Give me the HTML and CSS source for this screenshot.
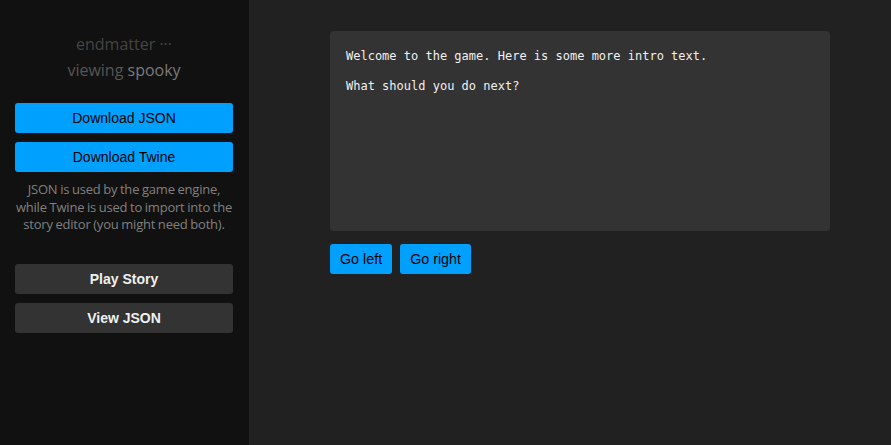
FILE: index.html
```html
<!DOCTYPE html>
<html>
<head>
<meta charset="utf-8">
<link rel="stylesheet" href="styles.css">
</head>
<body>
<div class="app">
  <aside class="sidebar">
    <div class="title">endmatter ···</div>
    <div class="viewing">viewing <span class="story">spooky</span></div>
    <div class="btns">
      <button class="btn primary">Download JSON</button>
      <button class="btn primary">Download Twine</button>
    </div>
    <p class="note">JSON is used by the game engine,<br>while Twine is used to import into the<br>story editor (you might need both).</p>
    <div class="btns lower">
      <button class="btn dark">Play Story</button>
      <button class="btn dark">View JSON</button>
    </div>
  </aside>
  <main class="main">
    <div class="screen">
      <p>Welcome to the game. Here is some more intro text.</p>
      <p>What should you do next?</p>
    </div>
    <div class="choices">
      <button class="choice">Go left</button>
      <button class="choice">Go right</button>
    </div>
  </main>
</div>
</body>
</html>
```

FILE: styles.css
```css
html, body {
  margin: 0;
  padding: 0;
  height: 100%;
}
body {
  background: #212121;
  font-family: "Open Sans", "Noto Sans", sans-serif;
}
.app {
  display: flex;
  height: 100%;
}
.sidebar {
  width: 249px;
  flex: none;
  background: #111111;
  padding: 32px 16px 0 15px;
  box-sizing: border-box;
  display: flex;
  flex-direction: column;
  text-align: center;
}
.title {
  color: #444;
  font-size: 16px;
  line-height: 24px;
}
.viewing {
  color: #555;
  font-size: 16px;
  line-height: 24px;
  margin-top: 2px;
}
.viewing .story {
  color: #7a7a7a;
}
.btns {
  display: flex;
  flex-direction: column;
  gap: 9px;
  margin-top: 21px;
}
.btns.lower {
  margin-top: 30px;
}
.btn {
  height: 30px;
  border: none;
  border-radius: 3px;
  font-family: "Liberation Sans", Arial, sans-serif;
  font-size: 14px;
  cursor: pointer;
  padding: 0;
}
.btn.primary {
  background: #00a0ff;
  color: #000;
}
.btn.dark {
  background: #333;
  color: #f0f0f0;
  font-weight: bold;
}
.note {
  margin: 9px -4px 0 -4px;
  color: #808080;
  font-family: "Open Sans", sans-serif;
  font-size: 13px;
  letter-spacing: -0.2px;
  word-spacing: -0.5px;
  line-height: 17.5px;
  white-space: nowrap;
}
.main {
  flex: 1;
  padding: 31px 0 0 81px;
}
.screen {
  width: 500px;
  height: 200px;
  box-sizing: border-box;
  background: #333;
  border-radius: 4px;
  padding: 18px 16px;
  font-family: "DejaVu Sans Mono", "Liberation Mono", monospace;
  font-size: 12px;
  color: #f0f0f0;
}
.screen p {
  margin: 0 0 15px 0;
  line-height: 15px;
}
.choices {
  display: flex;
  gap: 8px;
  margin-top: 13px;
}
.choice {
  height: 30px;
  padding: 0 10px;
  border: none;
  border-radius: 3px;
  background: #00a0ff;
  color: #000;
  font-family: "Liberation Sans", Arial, sans-serif;
  font-size: 14.3px;
}
```
